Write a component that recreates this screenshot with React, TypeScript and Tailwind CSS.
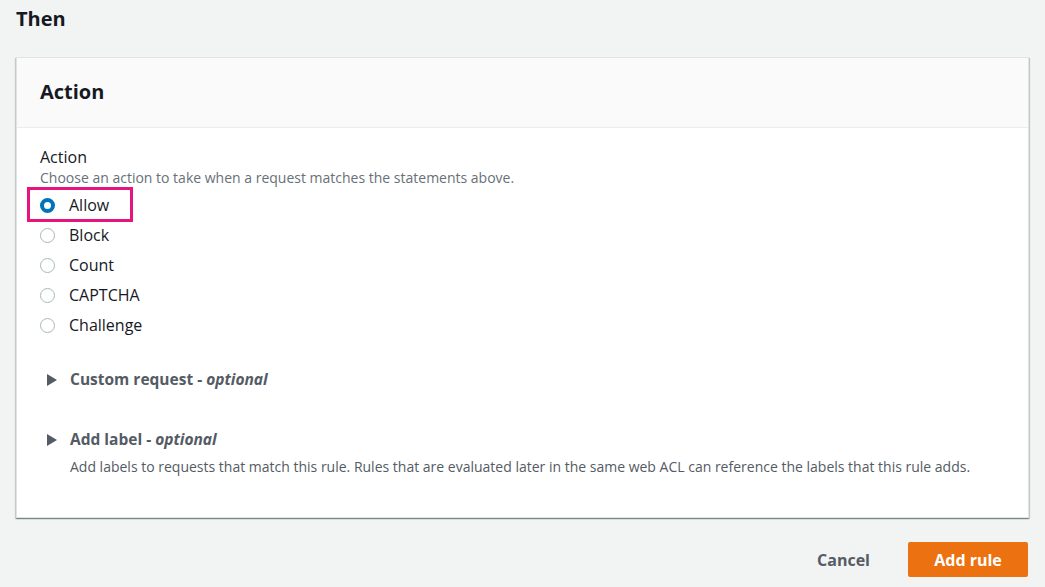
import React, { useState } from 'react';

const options = ['Allow', 'Block', 'Count', 'CAPTCHA', 'Challenge'];

function Radio({ checked }: { checked: boolean }) {
  return checked ? (
    <span className="box-border w-[15px] h-[15px] rounded-full border-[4px] border-[#0073bb] bg-white" />
  ) : (
    <span className="box-border w-[15px] h-[15px] rounded-full border border-[#aab7b8] bg-white" />
  );
}

function Expander({ title }: { title: string }) {
  return (
    <div className="flex items-center h-[24px] text-[#545b64] font-bold text-[15.5px]">
      <svg width="10" height="12" viewBox="0 0 10 12" className="ml-[7px] mr-[13px]">
        <path d="M0 0 L10 6 L0 12 Z" fill="#545b64" />
      </svg>
      <span>
        {title} - <i>optional</i>
      </span>
    </div>
  );
}

export default function App() {
  const [selected] = useState('Allow');

  return (
    <div
      className="w-[1045px] h-[587px] bg-[#f2f3f3] text-[#16191f] overflow-hidden"
      style={{ fontFamily: '"Open Sans", Arial, sans-serif' }}
    >
      <h2 className="px-[16px] pt-[6px] text-[20px] font-bold leading-[26px]">Then</h2>

      {/* Card */}
      <div className="mx-[16px] mt-[25px] w-[1013px] bg-white border border-[#e0e3e3] shadow-[0_1px_1px_0_rgba(0,28,36,0.3),1px_1px_1px_0_rgba(0,28,36,0.15),-1px_1px_1px_0_rgba(0,28,36,0.15)]">
        <div className="h-[70px] bg-[#fafafa] border-b border-[#eaeded] flex items-center px-[23px]">
          <h3 className="text-[20px] font-bold leading-[28px] -mt-[2px]">Action</h3>
        </div>

        <div className="px-[23px] pt-[18px] pb-[40px]">
          <div className="text-[16px] leading-[22px]">Action</div>
          <div className="text-[14px] leading-[20px] text-[#687078]">
            Choose an action to take when a request matches the statements above.
          </div>

          <div className="mt-[2px] flex flex-col">
            {options.map((o) => (
              <div key={o} className="relative h-[30px] flex items-center">
                {o === selected && (
                  <div className="absolute left-[-13px] top-[-3px] w-[106px] h-[35px] border-[3px] border-[#e7157b]" />
                )}
                <Radio checked={o === selected} />
                <span className="ml-[14px] text-[16px]">{o}</span>
              </div>
            ))}
          </div>

          <div className="mt-[28px]">
            <Expander title="Custom request" />
          </div>
          <div className="mt-[36px]">
            <Expander title="Add label" />
            <div className="ml-[30px] mt-[5px] text-[14px] leading-[20px] text-[#545b64]">
              Add labels to requests that match this rule. Rules that are evaluated later in the same web ACL can reference the labels that this rule adds.
            </div>
          </div>
        </div>
      </div>

      {/* Footer buttons */}
      <div className="mt-[24px] mr-[17px] flex justify-end items-center gap-[18px]">
        <button className="px-[20px] h-[35px] text-[16px] font-bold text-[#545b64]">Cancel</button>
        <button className="w-[120px] h-[35px] rounded-[2px] bg-[#ec7211] text-white text-[16px] font-bold">
          Add rule
        </button>
      </div>
    </div>
  );
}
